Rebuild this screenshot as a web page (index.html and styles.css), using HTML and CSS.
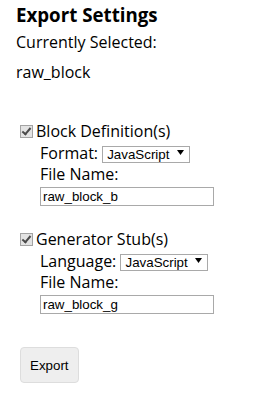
FILE: index.html
```html
<!DOCTYPE html>
<html lang="en">
<head>
    <meta charset="UTF-8">
    <title>Export Settings</title>
    <meta name="viewport" content="width=device-width, initial-scale=1.0">
    <link rel="stylesheet" href="styles.css">
</head>
<body>
<div class="panel">
    <h3 class="title">Export Settings</h3>
    <div class="line">Currently Selected:</div>
    <div class="line selected" id="selected">raw_block</div>

    <div class="option">
        <label class="line"><input type="checkbox" class="check" checked>Block Definition(s)</label>
        <div class="sub">
            <div class="select-row">Format: <select name="format">
                <option>JavaScript</option>
                <option>JSON</option>
            </select><svg class="arrow" width="7" height="5" viewBox="0 0 7 5"><path d="M0 0h7L3.5 5z"/></svg></div>
            <div class="line">File Name:</div>
            <input class="file" type="text" value="raw_block_b">
        </div>
    </div>

    <div class="option">
        <label class="line"><input type="checkbox" class="check" checked>Generator Stub(s)</label>
        <div class="sub">
            <div class="select-row">Language: <select name="language">
                <option>JavaScript</option>
                <option>Python</option>
                <option>PHP</option>
                <option>Lua</option>
                <option>Dart</option>
            </select><svg class="arrow" width="7" height="5" viewBox="0 0 7 5"><path d="M0 0h7L3.5 5z"/></svg></div>
            <div class="line">File Name:</div>
            <input class="file" type="text" value="raw_block_g">
        </div>
    </div>

    <button class="export">Export</button>
</div>
</body>
</html>
```

FILE: styles.css
```css
body {
    margin: 0;
    background: #fff;
    color: #000;
    font-family: "Open Sans", sans-serif;
    font-size: 16px;
}

.panel {
    padding: 3px 16px 0;
}

.title {
    margin: 0 0 5px;
    font-size: 18.72px;
    line-height: 24px;
    font-weight: bold;
}

.line {
    display: block;
    line-height: 21px;
}

.selected {
    margin-top: 9px;
}

.option {
    margin-top: 38px;
}

.option + .option {
    margin-top: 23px;
}

.check {
    -webkit-appearance: none;
    appearance: none;
    position: relative;
    width: 13px;
    height: 13px;
    margin: 0 3px 0 4px;
    vertical-align: -1px;
    border: 1px solid #a3a3a3;
    background: #e3e3e3;
    box-sizing: border-box;
}

.check:checked::after {
    content: "";
    position: absolute;
    left: 3px;
    top: 0;
    width: 3px;
    height: 7px;
    border: solid #4a4a4a;
    border-width: 0 2px 2px 0;
    transform: rotate(40deg);
}

.sub {
    padding-left: 24px;
}

.select-row {
    line-height: 22px;
}

select {
    -webkit-appearance: none;
    appearance: none;
    width: 88px;
    height: 17px;
    margin: 0;
    padding: 0 16px 0 4px;
    box-sizing: border-box;
    border: 1px solid #a9a9a9;
    border-radius: 0;
    background: #fff;
    color: #000;
    font-family: "Liberation Sans", Arial, sans-serif;
    font-size: 13.33px;
    line-height: 15px;
}

.arrow {
    margin-left: -13px;
    vertical-align: 4px;
    pointer-events: none;
}

.file {
    display: block;
    width: 174px;
    height: 19px;
    margin: 2px 0 0;
    padding: 1px 2px;
    box-sizing: border-box;
    border: 1px solid #a9a9a9;
    font-family: "Liberation Sans", Arial, sans-serif;
    font-size: 13.33px;
    color: #000;
}

.export {
    display: block;
    height: 36px;
    margin: 33px 0 0 4px;
    padding: 0 9px;
    background: #eee;
    border: 1px solid #ddd;
    border-radius: 4px;
    color: #000;
    font-family: "Liberation Sans", Arial, sans-serif;
    font-size: 13.33px;
}
```
